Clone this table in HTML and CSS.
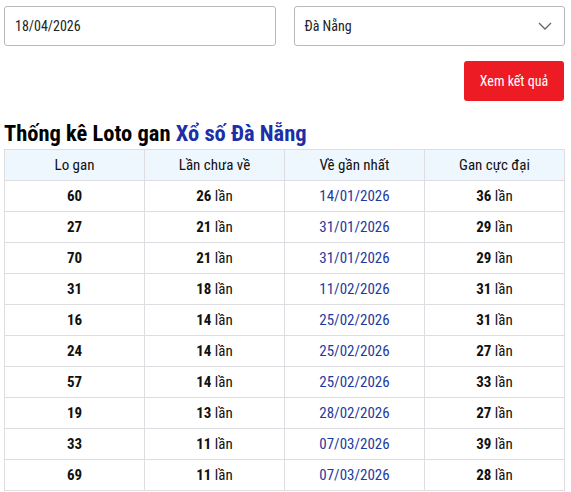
FILE: index.html
```html
<!DOCTYPE html>
<html lang="vi">
<head>
<meta charset="utf-8">
<link rel="stylesheet" href="styles.css">
</head>
<body>
<div class="page">
  <div class="filters">
    <div class="field">18/04/2026</div>
    <div class="field select">
      <span>Đà Nẵng</span>
      <svg class="chev" width="14" height="8" viewBox="0 0 14 8"><path d="M1 1l6 6 6-6" fill="none" stroke="#666" stroke-width="1.3"/></svg>
    </div>
  </div>
  <div class="actions"><button class="btn">Xem kết quả</button></div>
  <h1 class="title">Thống kê Loto gan <span class="accent">Xổ số Đà Nẵng</span></h1>
  <table class="stats">
    <thead>
      <tr><th>Lo gan</th><th>Lần chưa về</th><th>Về gần nhất</th><th>Gan cực đại</th></tr>
    </thead>
    <tbody>
      <tr><td><b>60</b></td><td><b>26</b> lần</td><td class="date">14/01/2026</td><td><b>36</b> lần</td></tr>
      <tr><td><b>27</b></td><td><b>21</b> lần</td><td class="date">31/01/2026</td><td><b>29</b> lần</td></tr>
      <tr><td><b>70</b></td><td><b>21</b> lần</td><td class="date">31/01/2026</td><td><b>29</b> lần</td></tr>
      <tr><td><b>31</b></td><td><b>18</b> lần</td><td class="date">11/02/2026</td><td><b>31</b> lần</td></tr>
      <tr><td><b>16</b></td><td><b>14</b> lần</td><td class="date">25/02/2026</td><td><b>31</b> lần</td></tr>
      <tr><td><b>24</b></td><td><b>14</b> lần</td><td class="date">25/02/2026</td><td><b>27</b> lần</td></tr>
      <tr><td><b>57</b></td><td><b>14</b> lần</td><td class="date">25/02/2026</td><td><b>33</b> lần</td></tr>
      <tr><td><b>19</b></td><td><b>13</b> lần</td><td class="date">28/02/2026</td><td><b>27</b> lần</td></tr>
      <tr><td><b>33</b></td><td><b>11</b> lần</td><td class="date">07/03/2026</td><td><b>39</b> lần</td></tr>
      <tr><td><b>69</b></td><td><b>11</b> lần</td><td class="date">07/03/2026</td><td><b>28</b> lần</td></tr>
    </tbody>
  </table>
</div>
</body>
</html>
```
FILE: styles.css
```css
* { box-sizing: border-box; }
html, body { margin: 0; background: #fff; }
body {
  font-family: "Roboto Condensed", "Liberation Sans Narrow", Roboto, sans-serif;
  font-size: 14px;
  color: #111;
}
.page { padding: 6px 6px 0 4px; }
.filters {
  display: grid;
  grid-template-columns: 1fr 1fr;
  gap: 18px;
}
.field {
  height: 40px;
  border: 1px solid #b9b9b9;
  border-radius: 3px;
  padding: 0 10px;
  display: flex;
  align-items: center;
  font-size: 14px;
  color: #222;
}
.select { justify-content: space-between; padding-right: 12px; }
.chev { display: block; }
.actions {
  display: flex;
  justify-content: flex-end;
  margin-top: 15px;
  padding-right: 1px;
}
.btn {
  width: 100px;
  height: 40px;
  border: 0;
  border-radius: 3px;
  background: #ed1c24;
  color: #fff;
  font-family: inherit;
  font-size: 14px;
}
.title {
  margin: 18px 0 2px;
  font-size: 22.5px;
  line-height: 28px;
  font-weight: 700;
  color: #000;
}
.accent { color: #1b2fa6; }
.stats {
  width: 100%;
  border-collapse: collapse;
  table-layout: fixed;
}
.stats th, .stats td {
  border: 1px solid #dddde2;
  height: 31px;
  padding: 0;
  text-align: center;
  font-size: 15px;
}
.stats th { background: #eef6fe; font-weight: 400; color: #111; }
.stats b { font-weight: 700; }
.date { color: #1e3aa0; }
```
